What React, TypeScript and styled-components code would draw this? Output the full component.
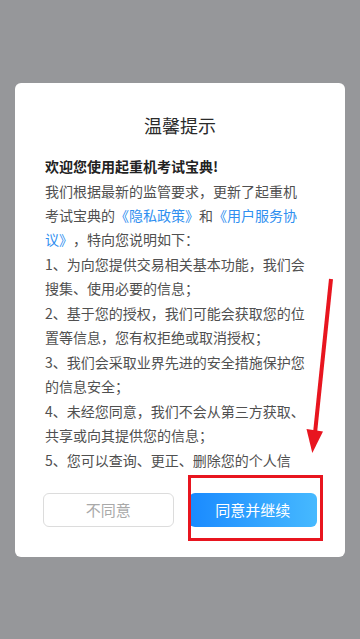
import React from "react";
import styled, { createGlobalStyle } from "styled-components";

const GlobalStyle = createGlobalStyle`
  html, body { margin: 0; padding: 0; }
  body {
    background: #96979a;
    font-family: "Noto Sans CJK SC", "Noto Sans", sans-serif;
    text-spacing-trim: space-all;
  }
`;

const Screen = styled.div`
  position: relative;
  width: 360px;
  height: 639px;
  background: #96979a;
  display: flex;
  align-items: center;
  justify-content: center;
  overflow: hidden;
`;

const Card = styled.div`
  width: 330px;
  box-sizing: border-box;
  background: #ffffff;
  border-radius: 6px;
  padding: 30px 28px 30px;
  display: flex;
  flex-direction: column;
`;

const Title = styled.h2`
  margin: 0 0 17px;
  font-size: 18px;
  line-height: 24px;
  font-weight: 400;
  color: #2a2a2a;
  text-align: center;
`;

const ScrollArea = styled.div`
  height: 321px;
  overflow-y: auto;
  padding: 0 10px 0 2px;
  scrollbar-width: none;
  text-spacing-trim: space-all;
  &::-webkit-scrollbar { display: none; }
`;

const Lead = styled.p`
  margin: 0 0 1px;
  font-size: 14px;
  line-height: 24px;
  font-weight: 700;
  color: #222222;
`;

const Para = styled.p`
  margin: 0 0 1px;
  font-size: 14px;
  line-height: 24px;
  color: #505050;
`;

const Link = styled.span`
  color: #2f8ff0;
`;

const ButtonRow = styled.div`
  margin-top: 18px;
  display: flex;
  gap: 15px;
`;

const Button = styled.button<{ $primary?: boolean }>`
  flex: 1;
  height: 34px;
  border-radius: 6px;
  font-family: inherit;
  font-size: 15px;
  cursor: pointer;
  border: ${(p) => (p.$primary ? "none" : "1px solid #dcdcdc")};
  background: ${(p) =>
    p.$primary ? "linear-gradient(90deg, #1a8aff 0%, #46b9ff 100%)" : "#ffffff"};
  color: ${(p) => (p.$primary ? "#ffffff" : "#a9a9a9")};
`;

const Annotation = styled.svg`
  position: absolute;
  left: 0;
  top: 0;
  width: 360px;
  height: 639px;
  pointer-events: none;
`;

export default function App() {
  return (
    <>
      <GlobalStyle />
      <Screen>
        <Card>
          <Title>温馨提示</Title>
          <ScrollArea>
            <Lead>欢迎您使用起重机考试宝典!</Lead>
            <Para>
              我们根据最新的监管要求，更新了起重机考试宝典的<Link>《隐私政策》</Link>和<Link>《用户服务协议》</Link>，特向您说明如下：
            </Para>
            <Para>1、为向您提供交易相关基本功能，我们会搜集、使用必要的信息；</Para>
            <Para>2、基于您的授权，我们可能会获取您的位置等信息，您有权拒绝或取消授权；</Para>
            <Para>3、我们会采取业界先进的安全措施保护您的信息安全；</Para>
            <Para>4、未经您同意，我们不会从第三方获取、共享或向其提供您的信息；</Para>
            <Para>5、您可以查询、更正、删除您的个人信息；</Para>
          </ScrollArea>
          <ButtonRow>
            <Button>不同意</Button>
            <Button $primary>同意并继续</Button>
          </ButtonRow>
        </Card>
        <Annotation viewBox="0 0 360 639">
          <line x1="331" y1="279" x2="314.5" y2="438" stroke="#e8151f" strokeWidth="4" />
          <polygon points="306.5,429 323,431.5 312.3,453" fill="#e8151f" />
          <rect x="189.5" y="476.5" width="132" height="63" fill="none" stroke="#e8151f" strokeWidth="3" />
        </Annotation>
      </Screen>
    </>
  );
}
